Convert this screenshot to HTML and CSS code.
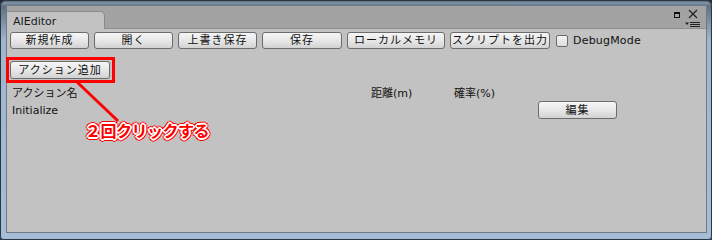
FILE: index.html
```html
<!DOCTYPE html>
<html lang="ja">
<head>
    <meta charset="UTF-8">
    <title>AIEditor</title>
    <link rel="stylesheet" href="styles.css">
</head>
<body>
    <div class="window">
        <div class="inner">
            <!-- Tab bar -->
            <div class="tabbar">
                <div class="tab">AIEditor</div>
                <svg class="win-controls" width="32" height="22" viewBox="0 0 32 22">
                    <rect x="2.5" y="6.5" width="5" height="5" fill="none" stroke="#111" stroke-width="1"/>
                    <rect x="2" y="6" width="6" height="2" fill="#111"/>
                    <path d="M17 4 L25 12 M25 4 L17 12" stroke="#222" stroke-width="1.2"/>
                    <path d="M13 16.5 L17 16.5 L15 19 Z" fill="#222"/>
                    <path d="M18 16.5 H28 M18 18.5 H28 M18 20.5 H28" stroke="#222" stroke-width="1"/>
                </svg>
            </div>

            <!-- Toolbar -->
            <div class="toolbar">
                <button class="btn w79">新規作成</button>
                <button class="btn w79">開く</button>
                <button class="btn w79">上書き保存</button>
                <button class="btn w80">保存</button>
                <button class="btn w98">ローカルメモリ</button>
                <button class="btn w100">スクリプトを出力</button>
                <label class="check"><span class="box"></span>DebugMode</label>
            </div>

            <div class="add-row">
                <span class="add-wrap"><button class="btn w100 tall">アクション追加</button></span>
            </div>

            <!-- Action list -->
            <div class="actions">
                <div>アクション名</div>
                <div>距離(m)</div>
                <div>確率(%)</div>
                <div></div>
                <div>Initialize</div>
                <div></div>
                <div></div>
                <div class="cell-btn"><button class="btn w79 tall">編集</button></div>
            </div>
        </div>

        <!-- Annotation -->
        <svg class="pointer" width="712" height="240" viewBox="0 0 712 240">
            <path d="M77 82 L118 121" stroke="#ff0000" stroke-width="3"/>
        </svg>
        <div class="note">２回クリックする</div>
    </div>
</body>
</html>
```

FILE: styles.css
```css
body {
    margin: 0;
    width: 712px;
    height: 240px;
    overflow: hidden;
    background: #1e2a36;
    font-family: "DejaVu Sans", "Noto Sans CJK JP", sans-serif;
    font-size: 11px;
    color: #111;
}
.window {
    position: relative;
    width: 712px;
    height: 240px;
    box-sizing: border-box;
    padding: 6px 6px 8px 7px;
    border-radius: 6px 6px 4px 4px;
    background: linear-gradient(to bottom, #4d5966 0px, #8196ab 3px, #5f6f80 6px, #9fb6cf 40px, #a5bdd6 100%);
    box-shadow: inset 0 0 0 1px #2d3640;
}
.inner {
    display: flex;
    flex-direction: column;
    height: 100%;
    background: #c2c2c2;
    box-shadow: 0 0 0 1px #707a86;
}
.tabbar {
    display: flex;
    align-items: flex-end;
    height: 22px;
    background: #a3a3a3;
    border-bottom: 1px solid #8e8e8e;
}
.tab {
    width: 91px;
    height: 17px;
    padding-left: 6px;
    line-height: 19px;
    background: #c2c2c2;
    border-top: 1px solid #8a8a8a;
    border-right: 1px solid #8a8a8a;
    border-radius: 0 5px 0 0;
    margin-bottom: -1px;
    color: #1a1a1a;
}
.win-controls {
    margin-left: auto;
    margin-right: 2px;
    align-self: flex-start;
}
.toolbar {
    display: flex;
    align-items: center;
    gap: 5px;
    padding: 3px 0 0 3px;
}
.btn {
    height: 17px;
    padding: 0;
    border: 1px solid #6c6c6c;
    border-radius: 3px;
    background: linear-gradient(to bottom, #f6f6f6, #e4e4e4 60%, #d2d2d2);
    font-family: "DejaVu Sans", "Noto Sans CJK JP", sans-serif;
    font-size: 11px;
    letter-spacing: 1px;
    line-height: 15px;
    color: #111;
}
.tall {
    height: 18px;
}
.w79 { width: 79px; }
.w80 { width: 80px; }
.w98 { width: 98px; }
.w100 { width: 100px; }
.check {
    display: flex;
    align-items: center;
    gap: 5px;
    margin-left: 1px;
    letter-spacing: 0.2px;
}
.box {
    width: 10px;
    height: 10px;
    border: 1px solid #6c6c6c;
    border-radius: 2px;
    background: linear-gradient(to bottom, #f4f4f4, #dcdcdc);
}
.add-row {
    padding: 12px 0 0 3px;
}
.add-wrap {
    position: relative;
    display: inline-block;
}
.add-wrap::after {
    content: "";
    position: absolute;
    top: -4px;
    left: -4px;
    right: -5px;
    bottom: -4px;
    border: 3px solid #ff0000;
}
.actions {
    display: grid;
    grid-template-columns: 359px 83px 84px 79px;
    grid-auto-rows: 18px;
    align-items: center;
    padding: 4px 0 0 5px;
}
.cell-btn {
    align-self: end;
}
.pointer {
    position: absolute;
    left: 0;
    top: 0;
}
.note {
    position: absolute;
    left: 85px;
    top: 118px;
    font-family: "Noto Sans CJK JP", sans-serif;
    font-weight: bold;
    font-size: 16px;
    color: #ff0000;
    letter-spacing: -0.5px;
    text-shadow:
        1px 0 0 #fff, -1px 0 0 #fff, 0 1px 0 #fff, 0 -1px 0 #fff,
        1px 1px 0 #fff, -1px -1px 0 #fff, 1px -1px 0 #fff, -1px 1px 0 #fff,
        2px 0 0 #fff, -2px 0 0 #fff, 0 2px 0 #fff, 0 -2px 0 #fff,
        3px 0 0 #f00, -3px 0 0 #f00, 0 3px 0 #f00, 0 -3px 0 #f00,
        2px 2px 0 #f00, -2px -2px 0 #f00, 2px -2px 0 #f00, -2px 2px 0 #f00;
}
```
